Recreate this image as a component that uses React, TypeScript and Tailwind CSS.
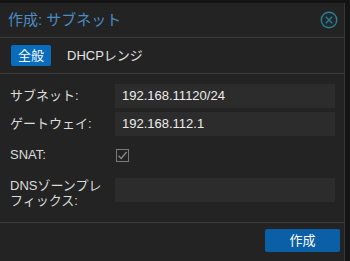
const font = { fontFamily: '"Liberation Sans", "Noto Sans CJK JP", sans-serif' };

const CloseIcon = () => (
  <svg width="18" height="18" viewBox="0 0 18 18" fill="none">
    <circle cx="9" cy="9" r="7.8" stroke="#2a7d93" strokeWidth="1.4" fill="#1d3a42" fillOpacity="0.35" />
    <path d="M5.8 5.8 L12.2 12.2 M12.2 5.8 L5.8 12.2" stroke="#2a7d93" strokeWidth="1.3" />
  </svg>
);

const Row = ({ label, value }: { label: string; value: string }) => (
  <div className="flex items-center h-[24px]">
    <div className="w-[115px] shrink-0 pl-[10px] text-[13px] text-[#dcdcdc]">{label}</div>
    <div className="w-[220px] h-[24px] bg-[#2c2c2c] flex items-center pl-[7px] text-[13px] text-[#ececec]">
      {value}
    </div>
  </div>
);

export default function App() {
  return (
    <div className="w-[350px] h-[261px] bg-[#141414] pt-[3px] overflow-hidden" style={font}>
      <div className="w-[345px] h-[258px] bg-[#232323] border-r border-[#363636] flex flex-col">
        <div className="h-[35px] flex items-center justify-between pl-[8px] pr-[6px] border-b border-[#3a3a3a]">
          <span className="text-[15px] text-[#4a8dc6]">作成: サブネット</span>
          <CloseIcon />
        </div>
        <div className="h-[36px] flex items-center pl-[11px] border-b border-[#3a3a3a]">
          <div className="w-[40px] h-[21px] bg-[#0a6cbd] rounded-[2px] flex items-center justify-center text-[13px] text-white">
            全般
          </div>
          <span className="ml-[16px] text-[13px] text-[#e6e6e6]">DHCPレンジ</span>
        </div>
        <div className="pt-[10px] pb-[14px] border-b border-[#3a3a3a]">
          <Row label="サブネット:" value="192.168.11120/24" />
          <div className="mt-[4px]">
            <Row label="ゲートウェイ:" value="192.168.112.1" />
          </div>
          <div className="mt-[4px] h-[30px] flex items-center">
            <div className="w-[116px] shrink-0 pl-[10px] text-[13px] text-[#dcdcdc]">SNAT:</div>
            <div className="w-[13px] h-[13px] border border-[#7a7a7a] flex items-center justify-center">
              <svg width="11" height="11" viewBox="0 0 11 11" fill="none">
                <path d="M1.5 5.8 L4.2 8.5 L9.6 2" stroke="#8a8a8a" strokeWidth="1.3" />
              </svg>
            </div>
          </div>
          <div className="mt-[8px] flex items-start">
            <div className="w-[115px] shrink-0 pl-[10px] pr-[4px] text-[13px] leading-[15px] text-[#dcdcdc]">
              DNSゾーンプレフィックス:
            </div>
            <div className="w-[220px] h-[24px] bg-[#2c2c2c]" />
          </div>
        </div>
        <div className="flex justify-end pt-[6px] pr-[4px]">
          <button className="w-[75px] h-[23px] bg-[#0b5fa6] rounded-[2px] text-[13px] text-white">
            作成
          </button>
        </div>
      </div>
    </div>
  );
}
